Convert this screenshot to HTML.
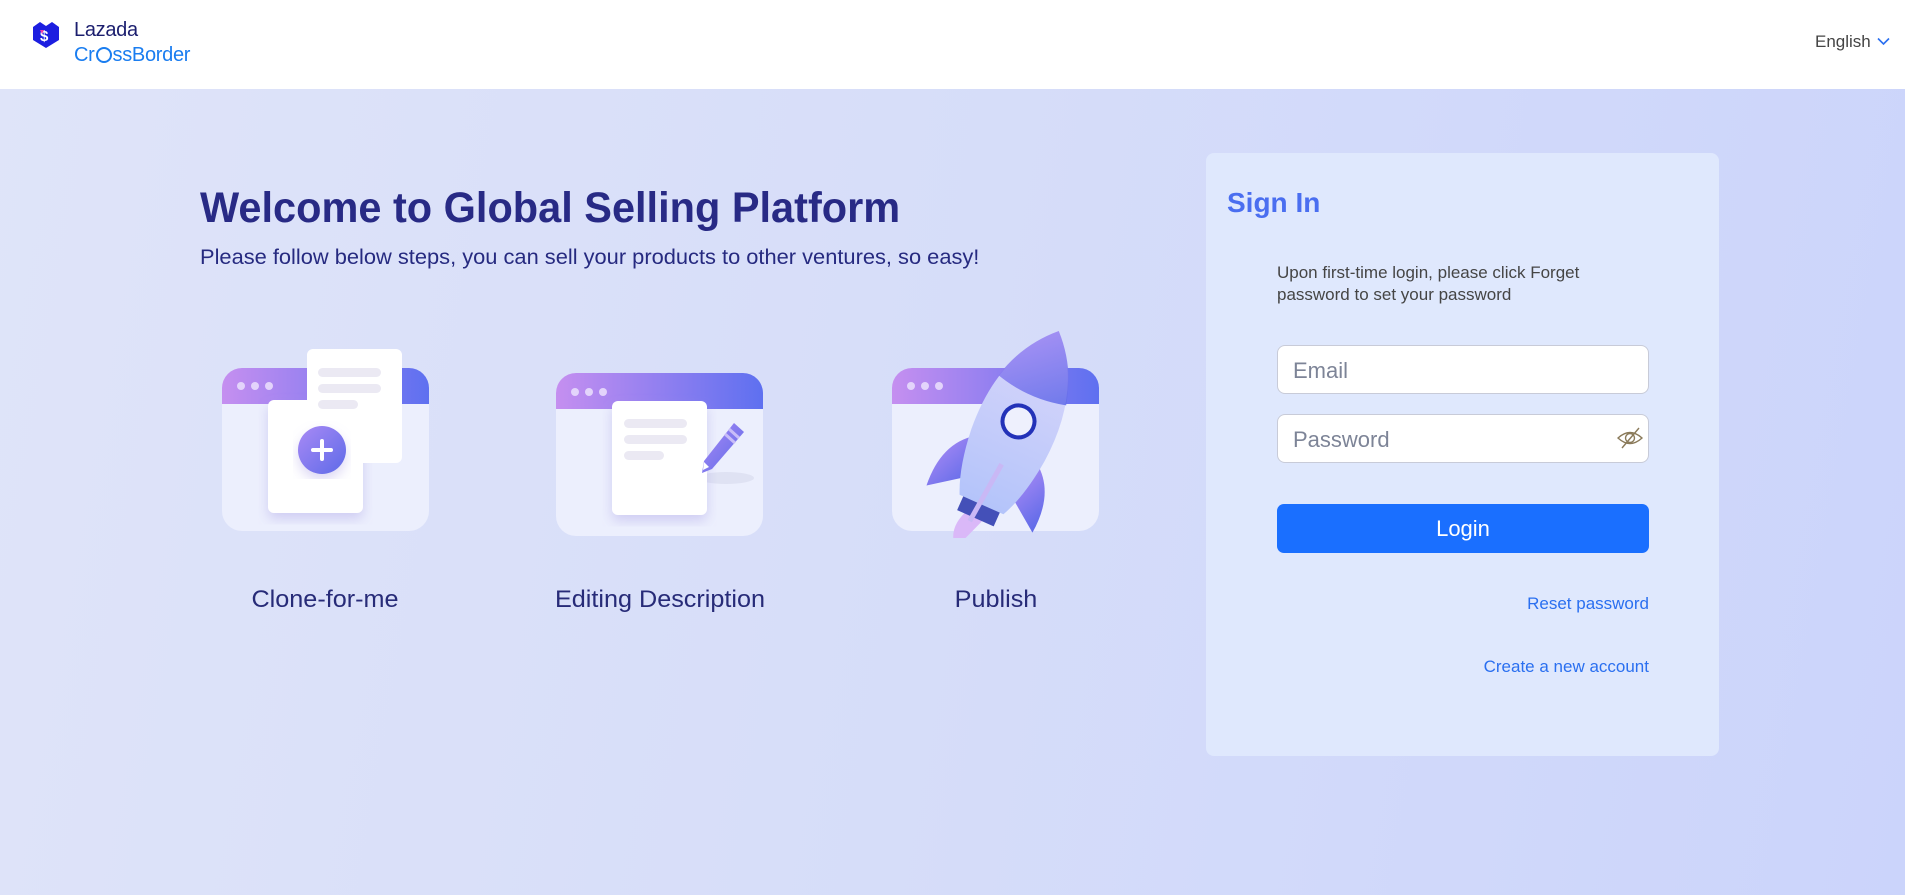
<!DOCTYPE html>
<html><head><meta charset="utf-8"><style>
*{margin:0;padding:0;box-sizing:border-box}
body{width:1905px;height:895px;overflow:hidden;font-family:"Liberation Sans",sans-serif;background:linear-gradient(100deg,#dfe4f9 0%,#d6ddf9 50%,#cbd4fb 100%);position:relative}
.hdr{position:absolute;left:0;top:0;width:1905px;height:89px;background:#fff}
.abs{position:absolute;white-space:nowrap}
.title{left:200px;top:184px;font-size:43px;font-weight:bold;color:#282a85;transform:scaleX(0.965);transform-origin:left}
.sub{left:200px;top:246px;font-size:21px;color:#262a80;transform:scaleX(1.04);transform-origin:left}
.lbl{font-size:24px;color:#272b78;top:586px;transform:translateX(-50%) scaleX(1.05)}
.card{position:absolute;left:1206px;top:153px;width:513px;height:603px;background:#dfe8fd;border-radius:8px}
.inp{position:absolute;left:1277px;width:372px;height:49px;background:#fff;border:1px solid #c8cbd8;border-radius:8px;font-size:22px;color:#7d8497;padding:12px 15px}
.btn{position:absolute;left:1277px;top:504px;width:372px;height:49px;background:#1a6fff;border-radius:7px;color:#fff;font-size:22px;text-align:center;line-height:49px}
.lnk{position:absolute;right:256px;font-size:17px;color:#2a6ff0}
</style></head><body>
<div class="hdr"></div>
<svg class="abs" style="left:31px;top:20px" width="30" height="30" viewBox="0 0 30 30"><path d="M2 7 L9 2 L15 6 L21 2 L28 7 L28 20 L15 28 L2 20Z" fill="#1c1ee0"/><text x="9" y="21" font-size="15" font-weight="bold" fill="#fff" font-family="Liberation Sans">$</text><path d="M9 10 L13 10 L11 14Z" fill="#f23ca6"/></svg>
<div class="abs" style="left:74px;top:19px;font-size:20px;color:#1b1e6e;letter-spacing:-0.3px">Lazada</div>
<div class="abs" style="left:74px;top:44px;font-size:20px;color:#1a7df0;letter-spacing:-0.3px">Cr<span style="display:inline-block;width:16px;height:16px;border:2px solid #1a7df0;border-radius:50%;vertical-align:-2px;margin:0 1px"></span>ssBorder</div>
<div class="abs" style="left:1815px;top:32px;font-size:17px;color:#444">English</div>
<svg class="abs" style="left:1877px;top:37px" width="13" height="9" viewBox="0 0 13 9"><path d="M1 1.5 L6.5 7 L12 1.5" stroke="#2a6ff0" stroke-width="1.6" fill="none"/></svg>

<div class="abs title">Welcome to Global Selling Platform</div>
<div class="abs sub">Please follow below steps, you can sell your products to other ventures, so easy!</div>

<svg width="0" height="0" style="position:absolute"><defs>
<linearGradient id="bar" x1="0" x2="1"><stop offset="0" stop-color="#c58ff0"/><stop offset="1" stop-color="#5e70f0"/></linearGradient>
<linearGradient id="pl" x1="0" y1="0" x2="1" y2="1"><stop offset="0" stop-color="#a98af5"/><stop offset="1" stop-color="#5d6ae8"/></linearGradient>
<linearGradient id="rk" x1="0" y1="0" x2="0" y2="1"><stop offset="0" stop-color="#dcd8fb"/><stop offset="1" stop-color="#b4c4fa"/></linearGradient>
<filter id="sh"><feDropShadow dx="0" dy="6" stdDeviation="6" flood-color="#9a8fe0" flood-opacity="0.35"/></filter>
</defs></svg>

<!-- box1 -->
<svg class="abs" style="left:212px;top:328px" width="230" height="210" viewBox="0 0 230 210">
<rect x="10" y="40" width="207" height="163" rx="20" fill="#eceffd"/>
<path d="M30 40 H197 A20 20 0 0 1 217 60 V76 H10 V60 A20 20 0 0 1 30 40Z" fill="url(#bar)"/>
<circle cx="29" cy="58" r="4" fill="#e3d4fb"/><circle cx="43" cy="58" r="4" fill="#e3d4fb"/><circle cx="57" cy="58" r="4" fill="#e3d4fb"/>
<rect x="56" y="72" width="95" height="113" rx="6" fill="#fff" filter="url(#sh)"/>
<rect x="95" y="21" width="95" height="114" rx="6" fill="#fff"/>
<rect x="106" y="40" width="63" height="9" rx="4.5" fill="#ebe9f3"/><rect x="106" y="56" width="63" height="9" rx="4.5" fill="#ebe9f3"/><rect x="106" y="72" width="40" height="9" rx="4.5" fill="#ebe9f3"/>
<circle cx="110" cy="122" r="24" fill="url(#pl)" filter="url(#sh)"/>
<path d="M110 113 V131 M101 122 H119" stroke="#fff" stroke-width="4" stroke-linecap="round"/>
</svg>
<!-- box2 -->
<svg class="abs" style="left:546px;top:333px" width="230" height="210" viewBox="0 0 230 210">
<rect x="10" y="40" width="207" height="163" rx="20" fill="#eceffd"/>
<path d="M30 40 H197 A20 20 0 0 1 217 60 V76 H10 V60 A20 20 0 0 1 30 40Z" fill="url(#bar)"/>
<circle cx="29" cy="59" r="4" fill="#e3d4fb"/><circle cx="43" cy="59" r="4" fill="#e3d4fb"/><circle cx="57" cy="59" r="4" fill="#e3d4fb"/>
<ellipse cx="180" cy="145" rx="28" ry="6" fill="#dfe2f3"/>
<rect x="66" y="68" width="95" height="114" rx="6" fill="#fff" filter="url(#sh)"/>
<rect x="78" y="86" width="63" height="9" rx="4.5" fill="#ebe9f3"/><rect x="78" y="102" width="63" height="9" rx="4.5" fill="#ebe9f3"/><rect x="78" y="118" width="40" height="9" rx="4.5" fill="#ebe9f3"/>
<path d="M188 90 L198 99 L166 136 L156 140 L158 128Z" fill="url(#pl)"/>
<path d="M183 96 L193 105 M179 101 L189 110" stroke="#c8bdf8" stroke-width="3"/>
<path d="M158 129 L163 134 L157 137Z" fill="#fff"/>
</svg>
<!-- box3 -->
<svg class="abs" style="left:882px;top:328px" width="230" height="210" viewBox="0 0 230 210">
<rect x="10" y="40" width="207" height="163" rx="20" fill="#eceffd"/>
<path d="M30 40 H197 A20 20 0 0 1 217 60 V76 H10 V60 A20 20 0 0 1 30 40Z" fill="url(#bar)"/>
<circle cx="29" cy="58" r="4" fill="#e3d4fb"/><circle cx="43" cy="58" r="4" fill="#e3d4fb"/><circle cx="57" cy="58" r="4" fill="#e3d4fb"/>
<g transform="translate(130,108) rotate(24)">
<path d="M-10 85 Q-22 110 -6 125 Q0 110 8 88Z" fill="#dab8f8"/>
<path d="M-34 15 Q-62 35 -58 80 L-28 58Z" fill="url(#pl)"/>
<path d="M34 15 Q62 35 58 80 L28 58Z" fill="url(#pl)"/>
<rect x="-20" y="70" width="40" height="20" fill="#4450b8"/>
<path d="M0 -115 Q46 -70 40 10 Q36 50 24 75 H-24 Q-36 50 -40 10 Q-46 -70 0 -115Z" fill="url(#rk)"/>
<path d="M0 -115 Q28 -88 37 -50 Q0 -40 -37 -50 Q-28 -88 0 -115Z" fill="url(#pl)" opacity="0.85"/>
<circle cx="0" cy="-16" r="16" fill="#eef0fd" stroke="#2332b8" stroke-width="4"/>
<path d="M2 30 L-4 95" stroke="#c9b8f5" stroke-width="5"/>
</g>
</svg>

<div class="abs lbl" style="left:325px">Clone-for-me</div>
<div class="abs lbl" style="left:660px">Editing Description</div>
<div class="abs lbl" style="left:996px">Publish</div>

<div class="card"></div>
<div class="abs" style="left:1227px;top:187px;font-size:28px;font-weight:bold;color:#4a6ef0">Sign In</div>
<div class="abs" style="left:1277px;top:262px;font-size:17px;color:#454545;line-height:22px;white-space:normal;width:350px">Upon first-time login, please click Forget password to set your password</div>
<div class="inp" style="top:345px">Email</div>
<div class="inp" style="top:414px">Password</div>
<svg class="abs" style="left:1617px;top:426px" width="26" height="24" viewBox="0 0 26 24"><path d="M1 12 Q13 1 25 12 Q13 23 1 12Z" stroke="#8a7a5a" stroke-width="1.4" fill="none"/><circle cx="13" cy="12" r="4.5" stroke="#8a7a5a" stroke-width="1.4" fill="none"/><path d="M5 22 L22 2" stroke="#8a7a5a" stroke-width="1.4"/></svg>
<div class="btn">Login</div>
<div class="lnk" style="top:594px">Reset password</div>
<div class="lnk" style="top:657px">Create a new account</div>
</body></html>
